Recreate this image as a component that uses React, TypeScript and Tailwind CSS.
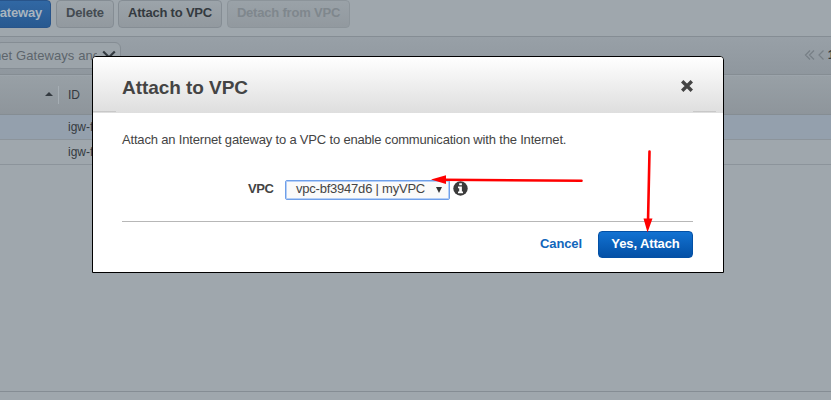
import type { ReactNode } from "react";

function ToolButton({ className, children }: { className: string; children: ReactNode }) {
  return (
    <button
      className={`h-7 shrink-0 rounded-[4px] border pb-[2px] text-center text-[13px] leading-[24px] font-bold tracking-[-0.2px] whitespace-nowrap ${className}`}
    >
      {children}
    </button>
  );
}

function Toolbar() {
  return (
    <div className="flex h-[37px] items-start border-b border-[#858d94] bg-[#9fa7ad]">
      <div className="flex">
        <ToolButton className="-ml-[10px] flex w-[61px] justify-end border-[#28548a] bg-linear-to-b from-[#3168a4] to-[#285990] pr-[8px] text-[#a9b4be]">
          Gateway
        </ToolButton>
        <ToolButton className="ml-[5px] w-[58px] border-[#858d94] bg-linear-to-b from-[#9ca4aa] to-[#92999f] text-[#444b51]">
          Delete
        </ToolButton>
        <ToolButton className="ml-[4px] w-[104px] border-[#858d94] bg-linear-to-b from-[#9ca4aa] to-[#92999f] text-[#343a40]">
          Attach to VPC
        </ToolButton>
        <ToolButton className="ml-[5px] w-[123px] border-[#8c949a] bg-linear-to-b from-[#9aa2a8] to-[#92999f] text-[#7f878d]">
          Detach from VPC
        </ToolButton>
      </div>
    </div>
  );
}

function FilterBar() {
  return (
    <div className="flex h-[38px] items-start justify-between border-b border-[#858d93] bg-linear-to-b from-[#98a0a7] to-[#8f979e] pt-[5px]">
      <div className="-ml-[5px] flex h-[27px] w-[126px] items-center rounded-[6px] border border-[#858d94] bg-[#9ca4aa] text-[13px] text-[#5d656c]">
        <span className="ml-[-2px] w-[103px] shrink-0 overflow-hidden tracking-[0.08px] whitespace-nowrap">net Gateways and</span>
        <svg className="mb-px ml-[5px] shrink-0" width="14" height="10" viewBox="0 0 14 10" fill="none" stroke="#343b41" strokeWidth="2.200">
          <path d="M1.200 1.500 7 7.300l5.800-5.800" />
        </svg>
      </div>
      <div className="mt-[6px] -mr-[4px] flex items-center text-[13px] leading-[13px] font-bold text-[#343b41]">
        <svg className="mr-[2px]" width="24" height="12" viewBox="0 0 24 12" fill="none" stroke="#777f86" strokeWidth="1.200">
          <path d="M8 1.500 3.500 6 8 10.500M12 1.500 7.500 6l4.500 4.500M21.500 1.500 17 6l4.500 4.500" />
        </svg>
        <span>1</span>
      </div>
    </div>
  );
}

function Table() {
  return (
    <div className="text-[#343a40]">
      <div className="flex h-10 items-center border-t border-b border-t-[#9ca4ab] border-b-[#858d93] bg-linear-to-b from-[#98a0a6] to-[#8e959b]">
        <span className="mb-[2px] ml-[45px] h-0 w-0 border-x-[4px] border-b-[4px] border-x-transparent border-b-[#343a40]" />
        <span className="ml-[5px] h-[18px] w-px bg-[#a5adb3]" />
        <span className="ml-[9px] text-[12px]">ID</span>
      </div>
      <div className="h-[25px] border-b border-[#8c949b] bg-[#94a0ad] pl-[68px] text-[12px] leading-[24px]">igw-f4</div>
      <div className="h-[25px] border-b border-[#8c949b] bg-[#9fa7ad] pl-[68px] text-[12px] leading-[24px]">igw-f8</div>
    </div>
  );
}

function Dialog() {
  return (
    <section className="absolute top-[56px] left-[92px] h-[217px] w-[632px] overflow-hidden rounded-t-[4px] border border-black bg-white text-[#444]">
      <header className="flex h-[56px] items-center justify-between bg-linear-to-b from-white to-[#dedede] pt-[5px] pr-[30px] pl-[29px]">
        <h2 className="text-[19px] leading-6 font-bold tracking-[-0.05px]">Attach to VPC</h2>
        <svg className="mb-[3px]" width="12" height="12" viewBox="0 0 12 12" stroke="#444" strokeWidth="3.400">
          <path d="m1.200 1.200 9.600 9.600M10.800 1.200 1.200 10.800" />
        </svg>
      </header>
      <div className="-mt-[2px] flex h-px justify-between">
        <span className="w-[23px] bg-[#c8c8c8]" />
        <span className="mr-[7px] w-[23px] bg-[#c8c8c8]" />
      </div>
      <p className="mt-[19px] ml-[29px] text-[13px] leading-[18px] tracking-[-0.178px] whitespace-nowrap">
        Attach an Internet gateway to a VPC to enable communication with the Internet.
      </p>
      <div className="mt-[30px] flex h-[20px] items-center pl-[155px] text-[13px]">
        <span className="w-[37px] font-bold tracking-[-0.4px]">VPC</span>
        <div className="mt-[2px] flex h-5 w-[165px] items-center justify-between rounded-[2px] border border-[#6f9fe8] bg-[#fafafa] pr-[7px] pb-[2px] pl-[10px] leading-4 inset-ring inset-ring-[#b5cff7]">
          <span className="tracking-[-0.22px] whitespace-nowrap">vpc-bf3947d6 | myVPC</span>
          <span className="mt-px h-0 w-0 border-x-[3px] border-t-[6px] border-x-transparent border-t-[#333]" />
        </div>
        <svg className="mb-[2px] ml-[3px]" width="15" height="15" viewBox="0 0 15 15">
          <circle cx="7.500" cy="7.500" r="7.200" fill="#3b3b3b" />
          <path fill="#fff" d="M6.200 2.300h2.700v2H6.200zM5 5.500h3.900v5H10v1.700H5v-1.700h1.200V7.200H5z" />
        </svg>
      </div>
      <footer className="mt-[22px] mr-[30px] ml-[29px] flex items-start justify-end border-t border-[#b7b7b7] pt-[9px]">
        <button className="mr-[16px] h-[26px] text-[13px] leading-[26px] font-bold tracking-[-0.1px] text-[#1166bb]">Cancel</button>
        <button className="h-[27px] w-[95px] rounded-[4px] border border-[#0350a5] bg-linear-to-b from-[#1272d2] to-[#0450a6] pb-[2px] text-[13px] leading-[23px] font-bold tracking-[-0.12px] text-white">
          Yes, Attach
        </button>
      </footer>
    </section>
  );
}

function Arrows() {
  return (
    <svg className="absolute top-0 left-0" width="831" height="400" fill="red" stroke="red" strokeLinecap="round">
      <path strokeWidth="2.600" d="M443 179.800 581.500 180.700M649.500 151.500 648 222" />
      <path stroke="none" d="M431 179.500 446 175.200V184zM647.500 232.500 643.500 218.500h9z" />
    </svg>
  );
}

export default function App() {
  return (
    <main className="relative flex h-[400px] w-[831px] flex-col overflow-hidden bg-[#9fa7ad] font-['Liberation_Sans',Arial,sans-serif]">
      <Toolbar />
      <FilterBar />
      <Table />
      <div className="mt-auto h-[9px] border-t border-[#858d94]" />
      <Dialog />
      <Arrows />
    </main>
  );
}
